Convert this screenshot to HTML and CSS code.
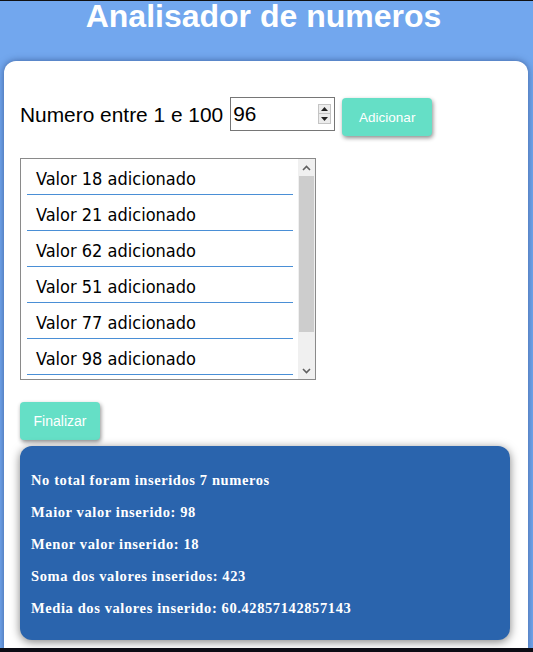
FILE: index.html
```html
<!DOCTYPE html>
<html lang="pt">
<head>
<meta charset="utf-8">
<title>Analisador de numeros</title>
<link rel="stylesheet" href="styles.css">
</head>
<body>
<header class="top">
  <h1 class="title">Analisador de numeros</h1>
</header>
<main class="card">
  <div class="entry">
    <label class="entry-label" for="num">Numero entre 1 e 100</label>
    <div class="numbox">
      <span class="numval" id="num">96</span>
      <span class="spin">
        <span class="spin-btn"><svg width="7" height="4" viewBox="0 0 7 4"><path d="M0 4 L3.5 0 L7 4 Z" fill="#222"/></svg></span>
        <span class="spin-btn"><svg width="7" height="4" viewBox="0 0 7 4"><path d="M0 0 L3.5 4 L7 0 Z" fill="#222"/></svg></span>
      </span>
    </div>
    <button class="btn btn-add" type="button">Adicionar</button>
  </div>

  <div class="listbox">
    <div class="list-items">
      <div class="item">Valor 18 adicionado</div>
      <div class="item">Valor 21 adicionado</div>
      <div class="item">Valor 62 adicionado</div>
      <div class="item">Valor 51 adicionado</div>
      <div class="item">Valor 77 adicionado</div>
      <div class="item">Valor 98 adicionado</div>
      <div class="item">Valor 96 adicionado</div>
    </div>
    <div class="scrollbar">
      <div class="sb-arrow"><svg width="9" height="6" viewBox="0 0 9 6"><path d="M1 5 L4.5 1.5 L8 5" fill="none" stroke="#606060" stroke-width="1.6"/></svg></div>
      <div class="sb-track"><div class="sb-thumb"></div></div>
      <div class="sb-arrow"><svg width="9" height="6" viewBox="0 0 9 6"><path d="M1 1 L4.5 4.5 L8 1" fill="none" stroke="#606060" stroke-width="1.6"/></svg></div>
    </div>
  </div>

  <button class="btn btn-end" type="button">Finalizar</button>

  <section class="results">
    <p>No total foram inseridos 7 numeros</p>
    <p>Maior valor inserido: 98</p>
    <p>Menor valor inserido: 18</p>
    <p>Soma dos valores inseridos: 423</p>
    <p>Media dos valores inserido: 60.42857142857143</p>
  </section>
</main>
<div class="bottom-bar"></div>
</body>
</html>
```

FILE: styles.css
```css
html {
  overflow: hidden;
}

body {
  margin: 0;
  background: #72a7ee;
  border-top: 1px solid #111;
  font-family: "Liberation Sans", Arial, sans-serif;
  height: 651px;
  box-sizing: border-box;
}

.top {
  height: 60px;
}

.title {
  margin: 0;
  font-size: 32px;
  line-height: 31px;
  font-weight: bold;
  color: #fff;
  text-align: center;
  padding-right: 6px;
}

.card {
  margin: 0 5px 0 4px;
  background: #fff;
  border-radius: 12px 12px 0 0;
  box-shadow: 0 0 7px rgba(20, 40, 90, 0.55);
  padding: 36px 18px 12px 16px;
  height: 591px;
  box-sizing: border-box;
}

.entry {
  display: flex;
  align-items: flex-start;
}

.entry-label {
  font-size: 20.9px;
  line-height: 36px;
  color: #000;
}

.numbox {
  margin-left: 7px;
  width: 105px;
  height: 34px;
  box-sizing: border-box;
  border: 1px solid #767676;
  display: flex;
  align-items: center;
  justify-content: space-between;
  padding: 0 3px 0 2px;
}

.numval {
  font-size: 20.8px;
  color: #000;
  line-height: 30px;
}

.spin {
  display: flex;
  flex-direction: column;
  width: 13px;
}

.spin-btn {
  height: 10px;
  border: 1px solid #c4c4c4;
  background: #ececec;
  display: flex;
  align-items: center;
  justify-content: center;
  box-sizing: border-box;
}

.spin-btn + .spin-btn {
  border-top: none;
}

.btn {
  border: none;
  background: #65dfc6;
  color: #fff;
  font-family: "Liberation Sans", Arial, sans-serif;
  font-size: 13.5px;
  border-radius: 4px;
  box-shadow: 1px 2px 4px rgba(0, 0, 0, 0.45);
  height: 38px;
  padding: 0;
  display: flex;
  align-items: center;
  justify-content: center;
}

.btn-add {
  margin-left: 7px;
  margin-top: 1px;
  width: 90px;
}

.listbox {
  margin-top: 22px;
  width: 296px;
  height: 222px;
  box-sizing: border-box;
  border: 1px solid #8a8a8a;
  display: flex;
}

.list-items {
  flex: 1;
  overflow: hidden;
}

.item {
  margin: 0 5px 0 6px;
  border-bottom: 1px solid #4a8fd6;
  padding: 4px 0 0 9px;
  line-height: 31px;
  height: 31px;
  font-family: "DejaVu Sans Condensed", "DejaVu Sans", sans-serif;
  font-stretch: condensed;
  font-size: 18px;
  color: #000;
  white-space: nowrap;
}

.scrollbar {
  width: 17px;
  background: #f0f0f0;
  display: flex;
  flex-direction: column;
}

.sb-arrow {
  height: 17px;
  display: flex;
  align-items: center;
  justify-content: center;
}

.sb-track {
  flex: 1;
}

.sb-thumb {
  height: 156px;
  margin: 0 1px;
  background: #cdcdcd;
}

.btn-end {
  margin-top: 22px;
  width: 80px;
  font-size: 14px;
}

.results {
  margin-top: 6px;
  background: #2a64ad;
  border-radius: 12px;
  box-shadow: 0 2px 10px rgba(0, 0, 0, 0.5);
  padding: 18px 11px 16px 11px;
  color: #fff;
}

.results p {
  margin: 0;
  font-family: "Liberation Serif", "Times New Roman", serif;
  font-weight: bold;
  font-size: 14.5px;
  letter-spacing: 0.6px;
  line-height: 32px;
}

.bottom-bar {
  position: fixed;
  left: 0;
  right: 0;
  bottom: 0;
  height: 4px;
  background: #0c0c14;
}
```
